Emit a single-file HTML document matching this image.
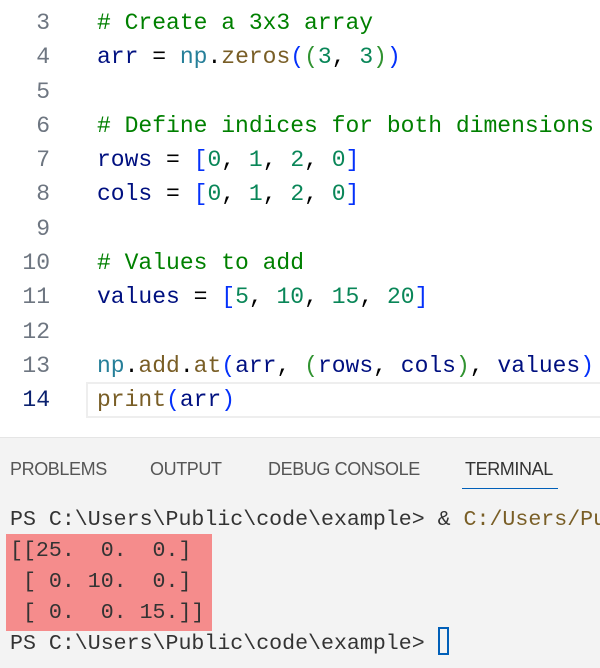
<!DOCTYPE html>
<html><head><meta charset="utf-8"><style>
body{margin:0;width:600px;height:667px;overflow:hidden;background:#fff;position:relative;font-family:"Liberation Mono",monospace}
.ln{position:absolute;left:0;width:50px;text-align:right;font-size:23px;color:#6e7681;line-height:34.3px}
.code{position:absolute;left:97px;right:0;overflow:hidden;font-size:23px;line-height:34.3px;white-space:pre;color:#001080}
.c{color:#008000}.n{color:#098658}.m{color:#267f99}.f{color:#795e26}.b{color:#0431fa}.g{color:#319331}.k{color:#000}
.hl{position:absolute;left:86px;right:0;top:382px;height:32px;border:2px solid #eeeeee;border-right:none}
.panel{position:absolute;left:0;top:437px;width:600px;height:230px;background:#f3f3f3;border-top:1px solid #e5e5e5}
.tab{position:absolute;top:459px;font-family:"Liberation Sans",sans-serif;font-size:18px;color:#555;letter-spacing:-0.4px}
.term{position:absolute;left:10px;right:0;overflow:hidden;font-size:21.6px;line-height:31px;white-space:pre;color:#333}
</style></head><body>
<div class="hl"></div>
<div class="ln" style="top:6px">3<br>4<br>5<br>6<br>7<br>8<br>9<br>10<br>11<br>12<br>13<br><span style="color:#0b216f">14</span></div>
<div class="code" style="top:6px"><span class="c"># Create a 3x3 array</span>
arr <span class="k">=</span> <span class="m">np</span><span class="k">.</span><span class="f">zeros</span><span class="b">(</span><span class="g">(</span><span class="n">3</span><span class="k">,</span> <span class="n">3</span><span class="g">)</span><span class="b">)</span>

<span class="c"># Define indices for both dimensions</span>
rows <span class="k">=</span> <span class="b">[</span><span class="n">0</span><span class="k">,</span> <span class="n">1</span><span class="k">,</span> <span class="n">2</span><span class="k">,</span> <span class="n">0</span><span class="b">]</span>
cols <span class="k">=</span> <span class="b">[</span><span class="n">0</span><span class="k">,</span> <span class="n">1</span><span class="k">,</span> <span class="n">2</span><span class="k">,</span> <span class="n">0</span><span class="b">]</span>

<span class="c"># Values to add</span>
values <span class="k">=</span> <span class="b">[</span><span class="n">5</span><span class="k">,</span> <span class="n">10</span><span class="k">,</span> <span class="n">15</span><span class="k">,</span> <span class="n">20</span><span class="b">]</span>

<span class="m">np</span><span class="k">.</span><span class="f">add</span><span class="k">.</span><span class="f">at</span><span class="b">(</span>arr<span class="k">,</span> <span class="g">(</span>rows<span class="k">,</span> cols<span class="g">)</span><span class="k">,</span> values<span class="b">)</span>
<span class="f">print</span><span class="b">(</span>arr<span class="b">)</span></div>
<div class="panel"></div>
<div class="tab" style="left:10px">PROBLEMS</div>
<div class="tab" style="left:150px">OUTPUT</div>
<div class="tab" style="left:268px">DEBUG CONSOLE</div>
<div class="tab" style="left:465px;color:#333">TERMINAL</div>
<div style="position:absolute;left:462px;top:488px;width:96px;height:1px;background:#005fb8"></div>
<div style="position:absolute;left:6px;top:534px;width:206px;height:97px;background:#f58c8c"></div>
<div class="term" style="top:505px">PS C:\Users\Public\code\example&gt; &amp; <span style="color:#795e26">C:/Users/Public</span>
[[25.  0.  0.]
 [ 0. 10.  0.]
 [ 0.  0. 15.]]
PS C:\Users\Public\code\example&gt; </div>
<div style="position:absolute;left:438px;top:627px;width:11px;height:28px;border:2px solid #005fb8;box-sizing:border-box"></div>
</body></html>
